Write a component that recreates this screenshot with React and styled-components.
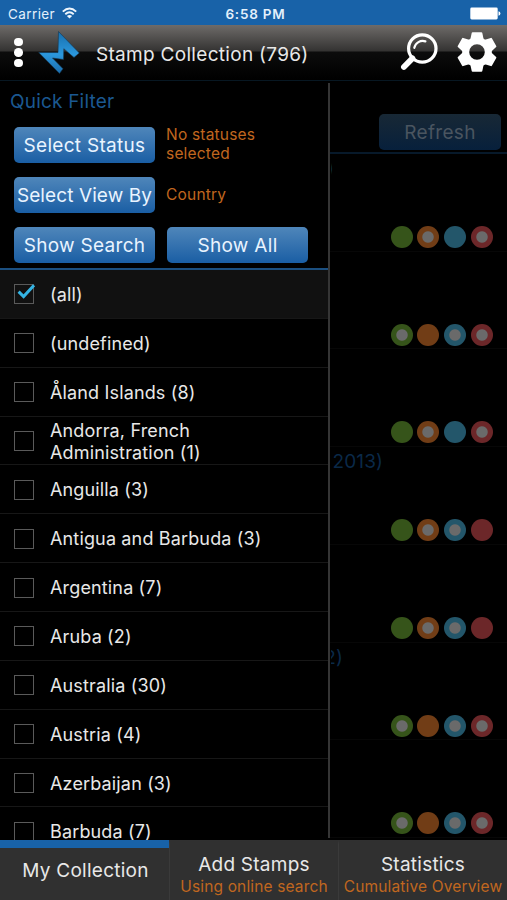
import React from "react";
import styled, { createGlobalStyle } from "styled-components";

const countries = [
  "(all)",
  "(undefined)",
  "Åland Islands (8)",
  "Andorra, French Administration (1)",
  "Anguilla (3)",
  "Antigua and Barbuda (3)",
  "Argentina (7)",
  "Aruba (2)",
  "Australia (30)",
  "Austria (4)",
  "Azerbaijan (3)",
  "Barbuda (7)",
];

// ring: 1 draws the light centre, in the order green, orange, blue, red
const stamps = [
  { title: ")", width: 3, rings: [0, 1, 0, 1] },
  { rings: [1, 0, 1, 1] },
  { rings: [0, 1, 0, 1] },
  { title: "2013)", width: 52, rings: [0, 1, 1, 0] },
  { rings: [0, 1, 1, 0] },
  { title: "2)", width: 12, rings: [1, 0, 1, 1] },
  { rings: [1, 0, 1, 1] },
];

const dotColors = ["#36541a", "#713d16", "#23566a", "#6c2729"];

function Logo() {
  return (
    <svg width="42" height="44" viewBox="0 0 42 44">
      <defs>
        <linearGradient id="logo" x1="0" y1="0" x2="0" y2="1">
          <stop offset="0" stopColor="#176fae" />
          <stop offset="0.55" stopColor="#2b97dc" />
          <stop offset="1" stopColor="#1b6dac" />
        </linearGradient>
      </defs>
      <path
        d="M20.5 0.5 L41.3 22 L36 26.5 L25.8 17.7 L25.5 28.5 L14.5 27 L25 37.8 L21.5 42.5 L0.7 21.5 L20 21.5 Z"
        fill="url(#logo)"
        stroke="#16364f"
        strokeWidth="0.6"
      />
    </svg>
  );
}

function Wifi() {
  return (
    <svg width="15" height="12" viewBox="0 0 15 12" fill="none" stroke="#eef6fd" strokeWidth="1.9">
      <path d="M0.8 4.6 Q7.5 -1.6 14.2 4.6" />
      <path d="M3.3 7.2 Q7.5 3.4 11.7 7.2" />
      <path d="M7.5 11.6 L4.9 9 Q7.5 6.8 10.1 9 Z" fill="#eef6fd" stroke="none" />
    </svg>
  );
}

function Battery() {
  return (
    <svg width="31" height="13" viewBox="0 0 31 13" fill="#fff">
      <rect x="0.3" y="0.5" width="27.4" height="12" rx="1.4" />
      <path d="M28.5 4.2 Q30.4 4.8 30.4 6.5 Q30.4 8.2 28.5 8.8 Z" />
    </svg>
  );
}

function Magnifier() {
  return (
    <svg width="38" height="38" viewBox="0 0 38 38" fill="none" stroke="#fff" strokeLinecap="round">
      <circle cx="22.3" cy="15.5" r="13.7" strokeWidth="3.2" />
      <path d="M14.3 14.8 A8.6 8.6 0 0 1 25.4 8.4" strokeWidth="2.2" />
      <path d="M12.4 25.4 L3.9 34" strokeWidth="5.8" />
    </svg>
  );
}

function Gear() {
  const teeth = [0, 60, 120, 180, 240, 300];
  return (
    <svg width="40" height="40" viewBox="-20 -20 40 40" fill="#fff">
      {teeth.map((a) => (
        <path
          key={a}
          transform={`rotate(${a})`}
          d="M-6.8 -12 L-5.3 -19 Q-5.1 -19.7 -4.4 -19.7 H4.4 Q5.1 -19.7 5.3 -19 L6.8 -12 Z"
        />
      ))}
      <circle r="11.3" fill="none" stroke="#fff" strokeWidth="7" />
    </svg>
  );
}

function App() {
  return (
    <>
      <GlobalStyle />
      <Screen>
        <StatusBar>
          <Carrier>
            Carrier <Wifi />
          </Carrier>
          <Clock>6:58 PM</Clock>
          <Power>
            <Battery />
          </Power>
        </StatusBar>
        <Header>
          <Dots>
            <i />
            <i />
            <i />
          </Dots>
          <Logo />
          <Title>Stamp Collection (796)</Title>
          <Magnifier />
          <Gear />
        </Header>
        <Body>
          <Panel>
            <Filter>
              <Heading>Quick Filter</Heading>
              <Grid>
                <Button>Select Status</Button>
                <Hint>
                  No statuses
                  <br />
                  selected
                </Hint>
                <Button $tight>Select View By</Button>
                <Hint>Country</Hint>
                <Button>Show Search</Button>
                <Button>Show All</Button>
              </Grid>
            </Filter>
            <List>
              {countries.map((name, i) => (
                <Row key={name} $active={i === 0}>
                  <Box>
                    {i === 0 && (
                      <svg width="20" height="18" viewBox="0 0 20 18">
                        <path d="M2.6 8.6 L7.6 13.6 L18 2.2" fill="none" stroke="#34b4e4" strokeWidth="3" />
                      </svg>
                    )}
                  </Box>
                  <Name>{name}</Name>
                </Row>
              ))}
            </List>
          </Panel>
          <Divider />
          <Collection>
            <Toolbar>
              <Refresh>Refresh</Refresh>
            </Toolbar>
            {stamps.map((s, i) => (
              <Stamp key={i}>
                <StampTitle $width={s.width || 0}>{s.title}</StampTitle>
                <Statuses>
                  {s.rings.map((ring, n) => (
                    <Status key={n} $color={dotColors[n]} $ring={ring} />
                  ))}
                </Statuses>
              </Stamp>
            ))}
          </Collection>
        </Body>
        <Tabs>
          <Tab $active>My Collection</Tab>
          <Tab>
            Add Stamps
            <small>Using online search</small>
          </Tab>
          <Tab>
            Statistics
            <small>Cumulative Overview</small>
          </Tab>
        </Tabs>
      </Screen>
    </>
  );
}

export default App;

const GlobalStyle = createGlobalStyle`
  * {
    box-sizing: border-box;
  }
  body {
    margin: 0;
    background: #000;
  }
`;

const Screen = styled.div`
  width: 507px;
  height: 900px;
  display: flex;
  flex-direction: column;
  overflow: hidden;
  background: #000;
  color: #e8e8e8;
  font-family: Inter, "Liberation Sans", sans-serif;
`;

const StatusBar = styled.div`
  height: 25px;
  padding: 3px 6px 0 8px;
  display: grid;
  grid-template-columns: 1fr auto 1fr;
  align-items: center;
  background: #1862a8;
  color: #e3f0fb;
  font-size: 13.5px;
  line-height: 22px;
`;

const Carrier = styled.div`
  display: flex;
  align-items: center;
  gap: 7px;
  letter-spacing: 0.4px;

  svg {
    margin-top: -2px;
  }
`;

const Clock = styled.div`
  padding-left: 2px;
  font-weight: 600;
  letter-spacing: 0.8px;
`;

const Power = styled.div`
  display: flex;
  justify-content: flex-end;
  margin-top: -1px;
`;

const Header = styled.div`
  height: 56px;
  flex: none;
  padding: 0 10px 0 14px;
  display: flex;
  align-items: center;
  background: linear-gradient(#6e6b69 0, #343332 26px, #0c0c0c 27px, #000 54px);
  border-bottom: 1px solid #071722;

  > svg {
    flex: none;
  }
`;

const Dots = styled.div`
  width: 24px;
  padding-left: 0.4px;
  display: flex;
  flex-direction: column;
  gap: 2px;

  i {
    width: 8.6px;
    height: 8.6px;
    border-radius: 50%;
    background: #fff;
  }
`;

const Title = styled.h1`
  flex: 1;
  margin: 0 0 0 16px;
  padding-top: 4px;
  font-size: 19px;
  font-weight: 400;
  letter-spacing: 0.3px;
  white-space: nowrap;

  & + svg {
    margin-right: 19px;
    margin-top: -1px;
  }

  & ~ svg:last-child {
    margin-top: -1px;
  }
`;

const Body = styled.div`
  height: 759px;
  flex: none;
  display: flex;
`;

const Panel = styled.div`
  width: 328px;
  display: flex;
  flex-direction: column;
`;

const Filter = styled.div`
  height: 189px;
  flex: none;
  border-bottom: 2px solid #1b4f80;
`;

const Heading = styled.h2`
  margin: 0;
  padding: 9px 0 0 10px;
  height: 46px;
  font-size: 19px;
  font-weight: 400;
  line-height: 24px;
  letter-spacing: 0.2px;
  color: #1b5891;
`;

const Grid = styled.div`
  padding-left: 14px;
  display: grid;
  grid-template-columns: 141px 141px;
  grid-auto-rows: 36px;
  gap: 14px 12px;
  align-items: center;
`;

const Button = styled.button`
  height: 36px;
  padding: 0;
  border: 0;
  border-radius: 5px;
  background: linear-gradient(#4f86ba, #1a5ea4);
  color: #e9f4ff;
  font: 19px Inter, sans-serif;
  letter-spacing: ${(p) => (p.$tight ? "0.1px" : "0.3px")};
  white-space: nowrap;
`;

const Hint = styled.div`
  margin: -2px 0 0 -1px;
  font-size: 15.5px;
  line-height: 19px;
  letter-spacing: 0.2px;
  color: #c0671f;
`;

const List = styled.div`
  flex: 1;
  overflow: hidden;
`;

const Row = styled.div`
  height: 48.87px;
  padding: 1px 0 0 14px;
  display: flex;
  align-items: center;
  gap: 16px;
  border-bottom: 1px solid #171717;
  background: ${(p) => (p.$active ? "#111" : "#000")};
`;

const Box = styled.div`
  width: 20px;
  height: 20px;
  flex: none;
  border: 1px solid #5a5a5a;

  svg {
    display: block;
    margin: -2px 0 0 1px;
    overflow: visible;
  }
`;

const Name = styled.div`
  width: 230px;
  padding-top: 1px;
  font-size: 18px;
  line-height: 22px;
  letter-spacing: 0.15px;
`;

const Divider = styled.div`
  width: 2px;
  margin: 2px 0;
  background: #353535;
`;

const Collection = styled.div`
  flex: 1;
  overflow: hidden;
`;

const Toolbar = styled.div`
  height: 73px;
  padding: 33px 6px 0 0;
  display: flex;
  justify-content: flex-end;
  border-bottom: 2px solid #07192a;
`;

const Refresh = styled(Button)`
  width: 122px;
  background: linear-gradient(#182835, #07203c);
  color: #4a5560;
`;

const Stamp = styled.div`
  height: 97.73px;
  padding: 3px 14px 2.8px 1px;
  display: flex;
  flex-direction: column;
  justify-content: space-between;
  border-bottom: 1px solid #070707;
`;

const StampTitle = styled.div`
  width: ${(p) => p.$width}px;
  height: 24px;
  display: flex;
  justify-content: flex-end;
  overflow: hidden;
  font-size: 19px;
  line-height: 24px;
  letter-spacing: 0.1px;
  color: #0a2948;
`;

const Statuses = styled.div`
  display: flex;
  justify-content: flex-end;
  gap: 4.8px;
`;

const Status = styled.div`
  width: 22px;
  height: 22px;
  border-radius: 50%;
  background: ${(p) =>
    p.$ring ? `radial-gradient(circle, #6a6a6a 5.2px, ${p.$color} 6.2px)` : p.$color};
`;

const Tabs = styled.div`
  height: 60px;
  flex: none;
  display: grid;
  grid-template-columns: 169px 169px 169px;
  background: #303030;
`;

const Tab = styled.div`
  padding: ${(p) => (p.$active ? "11px 0 0 2px" : "9px 0 0")};
  border-top: ${(p) => (p.$active ? "8px solid #1862a8" : "4px solid #303030")};
  border-left: ${(p) => (p.$active ? "0" : "1px solid #3a3a3a")};
  display: flex;
  flex-direction: column;
  align-items: center;
  font-size: 19px;
  line-height: 24px;
  letter-spacing: 0.25px;
  white-space: nowrap;

  small {
    font-size: 15.5px;
    line-height: 20px;
    letter-spacing: 0.15px;
    color: #c0671f;
  }
`;
